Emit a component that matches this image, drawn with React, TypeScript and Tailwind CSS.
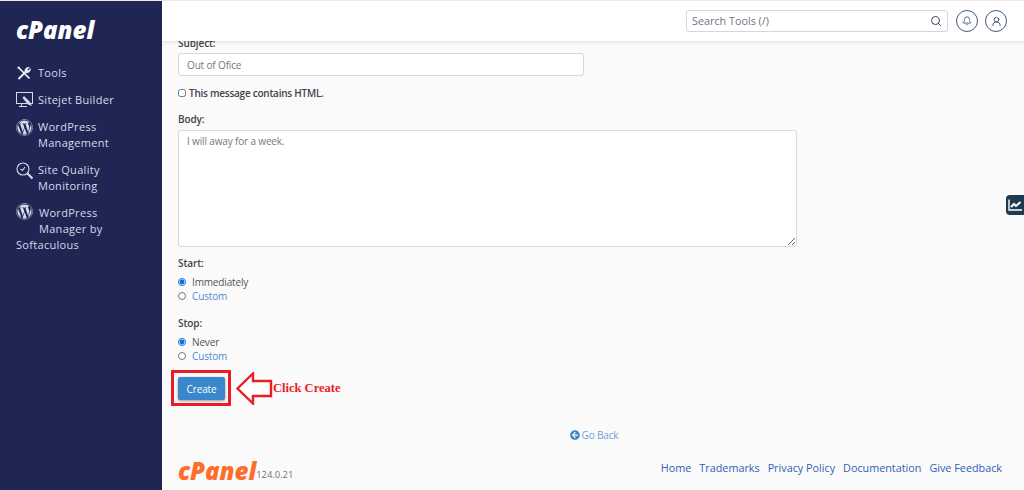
import { Search, Bell, UserRound } from 'lucide-react'
import { FaWordpress, FaArrowCircleLeft } from 'react-icons/fa'

const ToolsIcon = () => (
  <svg width="16" height="16" viewBox="0 0 16 16" fill="none" stroke="#eef0f7">
    <path d="M2.5 14 L9.5 7" strokeWidth="1.8" />
    <path d="M9 7.5 C8 4.5 10.5 1.5 13.5 2.5 L11.2 4.8 L12.2 5.8 L14.5 3.5 C15 6.5 12 9 9 7.5 Z" fill="#eef0f7" strokeWidth="0.4" />
    <path d="M3 3 L13.5 13.5" strokeWidth="1.7" />
    <path d="M1.8 3.4 L3.4 1.8" strokeWidth="1.7" />
  </svg>
)

const MonitorIcon = () => (
  <svg width="18" height="18" viewBox="0 0 18 18" fill="none" stroke="#d5d9ea" strokeWidth="1">
    <rect x="0.5" y="1.5" width="16" height="11" />
    <path d="M6 12.5 L5 15.5 H10 M3 15.5 H11" />
    <path d="M8 5 L14 11 L16 15 L12 13.5 L6.5 7 Z" fill="#d5d9ea" stroke="none" />
  </svg>
)

const QualityIcon = () => (
  <svg width="18" height="18" viewBox="0 0 18 18" fill="none" stroke="#d5d9ea" strokeWidth="1.1">
    <circle cx="7" cy="7" r="6" />
    <path d="M4.5 7 L6.5 8.5 L9 5" />
    <path d="M11.5 11.5 L16.5 16.5" strokeWidth="2.2" />
  </svg>
)

const TrendIcon = () => (
  <svg width="14" height="12" viewBox="0 0 14 12" fill="none" stroke="white" strokeWidth="1.4">
    <path d="M1 0.5 V11 H14" />
    <path d="M3 8 L6 5 L8 7 L12.5 3" strokeWidth="2" />
  </svg>
)

const navLabel = 'text-[11px] leading-[16px] tracking-[0.3px] text-[#d5d9ea]'

function Sidebar() {
  return (
    <aside className="w-[162px] shrink-0 bg-[#1f2653] pl-4 pt-[18px]">
      <div className="h-[24px] text-[24px] leading-[22px] font-extrabold italic text-white">cPanel</div>
      <nav className="mt-[16px] flex flex-col">
        <div className="flex h-[27px] items-center gap-[6px]">
          <ToolsIcon />
          <span className={navLabel}>Tools</span>
        </div>
        <div className="flex h-[27px] items-center gap-[4px]">
          <MonitorIcon />
          <span className={navLabel}>Sitejet Builder</span>
        </div>
        <div className="mt-[6px] flex gap-[5px]">
          <FaWordpress size={17} className="text-[#d5d9ea]" />
          <span className={navLabel}>WordPress<br />Management</span>
        </div>
        <div className="mt-[11px] flex gap-[4px]">
          <QualityIcon />
          <span className={navLabel}>Site Quality<br />Monitoring</span>
        </div>
        <div className={`mt-[9px] ${navLabel}`}>
          <FaWordpress size={17} className="mr-[6px] inline-block align-[-3px] text-[#d5d9ea]" />
          WordPress<br />
          <span className="ml-[23px]">Manager by</span><br />
          Softaculous
        </div>
      </nav>
    </aside>
  )
}

function Header() {
  return (
    <header className="relative z-10 flex h-[40px] shrink-0 items-center justify-end gap-[7px] bg-white pr-[17px] shadow-[0_1px_4px_rgba(0,0,0,0.12)]">
      <div className="mr-[1px] flex h-[22px] w-[262px] items-center justify-between rounded-[3px] border border-[#d3d5e2] pl-[5px] pr-[5px]">
        <span className="text-[10.8px] text-[#70757f]">Search Tools (/)</span>
        <Search size={12} strokeWidth={2} className="text-[#3d4550]" />
      </div>
      <div className="flex h-[22px] w-[22px] items-center justify-center rounded-full border border-[#4a5384]">
        <Bell size={10} className="text-[#3f4877]" />
      </div>
      <div className="flex h-[22px] w-[22px] items-center justify-center rounded-full border border-[#4a5384]">
        <UserRound size={11} className="text-[#3f4877]" />
      </div>
    </header>
  )
}

function Radio({ checked, label }: { checked?: boolean; label: string }) {
  return (
    <div className="flex h-[14px] items-center gap-[6px]">
      <input type="radio" readOnly checked={!!checked} className="m-0 h-[8px] w-[8px] accent-[#0b6fe0]" />
      <span className={checked ? 'text-[#555]' : 'text-[#4e8dcf]'}>{label}</span>
    </div>
  )
}

const fieldLabel = 'text-[10px] font-semibold leading-[14px] tracking-[-0.1px] text-[#444]'

function Form() {
  return (
    <main className="flex-1 pl-4 text-[10px] leading-[14px] tracking-[-0.15px]">
      <div className={`-mt-[5px] ${fieldLabel}`}>Subject:</div>
      <div className="mt-[3px] flex h-[23px] w-[406px] items-center rounded-[3px] border border-[#d9d9d9] bg-white pl-2 text-[#777]">Out of Ofice</div>
      <label className="mt-[10px] flex h-[14px] items-center gap-[3px] font-semibold tracking-[-0.25px] text-[#444]">
        <input type="checkbox" readOnly className="m-0 h-[8px] w-[8px]" />
        This message contains HTML.
      </label>
      <div className={`mt-[12px] ${fieldLabel}`}>Body:</div>
      <textarea
        readOnly
        value="I will away for a week."
        className="mt-[4px] block h-[117px] w-[619px] rounded-[3px] border border-[#d9d9d9] bg-white px-2 py-[3px] text-[#777] outline-none"
      />
      <div className={`mt-[9px] ${fieldLabel}`}>Start:</div>
      <div className="mt-[5px]"><Radio checked label="Immediately" /><Radio label="Custom" /></div>
      <div className={`mt-[13px] ${fieldLabel}`}>Stop:</div>
      <div className="mt-[5px]"><Radio checked label="Never" /><Radio label="Custom" /></div>

      <div className="relative mt-[14px] flex h-[23px] items-center">
        <button className="flex h-[23px] w-[47px] items-center justify-center rounded-[2px] bg-[#3a87cb] text-[10px] text-white shadow-[0_1px_3px_rgba(0,0,0,0.4)]">Create</button>
        {/* annotation drawn over the screenshot */}
        <div className="absolute -left-[7px] -top-[7px] h-[36px] w-[60px] border-[3px] border-[#ec1c24]" />
        <svg className="absolute left-[58px] -top-[5px]" width="37" height="33" viewBox="0 0 37 33" fill="white" stroke="#ec1c24" strokeWidth="2.4">
          <path d="M1.5 16.5 L17 1.5 V9 H35 V24 H17 V31.5 Z" />
        </svg>
        <span className="absolute left-[95px] top-[4px] whitespace-nowrap font-['Liberation_Serif',serif] text-[12.5px] font-bold tracking-[0px] text-[#ec1c24]">Click Create</span>
      </div>

      <div className="mt-[28px] flex w-[832px] items-center justify-center gap-[2px] text-[#6fa0d6]">
        <FaArrowCircleLeft size={10} className="text-[#3a87cb]" />
        Go Back
      </div>

      <footer className="mt-[18px] flex w-[824px] items-start justify-between tracking-normal">
        <div className="flex items-end">
          <span className="text-[24px] leading-[22px] font-extrabold italic text-[#ff6c2c]">cPanel</span>
          <span className="text-[9.4px] text-[#6b7280]">124.0.21</span>
        </div>
        <div className="flex gap-2 text-[10.8px] leading-[16px] text-[#2f5fb5]">
          <span>Home</span><span>Trademarks</span><span>Privacy Policy</span><span>Documentation</span><span>Give Feedback</span>
        </div>
      </footer>
    </main>
  )
}

export default function App() {
  return (
    <div className="relative flex h-[490px] w-[1024px] overflow-hidden border-t border-[#f6e6e8] bg-[#fafafa] font-['Open_Sans',sans-serif]">
      <Sidebar />
      <div className="flex min-w-0 flex-1 flex-col">
        <Header />
        <Form />
      </div>
      <div className="absolute right-0 top-[194px] flex h-[20px] w-[18px] items-center justify-center rounded-l-[4px] bg-[#1c3a52]">
        <TrendIcon />
      </div>
    </div>
  )
}
